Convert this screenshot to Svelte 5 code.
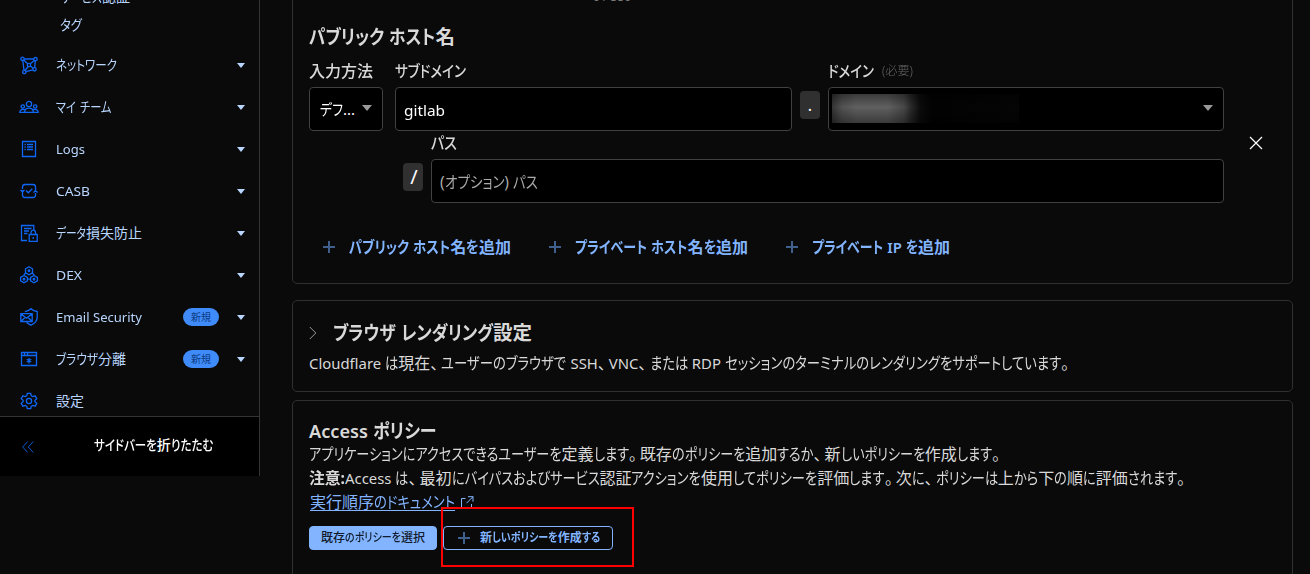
<script>
  const nav = [
    { icon: 'network', label: 'ネットワーク', w: 61, arrow: true },
    { icon: 'team', label: 'マイ チーム', w: 55, arrow: true },
    { icon: 'logs', label: 'Logs', w: 29, arrow: true },
    { icon: 'casb', label: 'CASB', w: 34, arrow: true },
    { icon: 'dlp', label: 'データ損失防止', w: 86, arrow: true },
    { icon: 'dex', label: 'DEX', w: 26, arrow: true },
    { icon: 'email', label: 'Email Security', w: 86, arrow: true, badge: true },
    { icon: 'browser', label: 'ブラウザ分離', w: 70, arrow: true, badge: true },
    { icon: 'gear', label: '設定', w: 28 }
  ];

  const adds = [
    { label: 'パブリック ホスト名を追加', w: 162 },
    { label: 'プライベート ホスト名を追加', w: 173 },
    { label: 'プライベート IP を追加', w: 138 }
  ];

  // Splits a string into punctuation, kana runs and everything else.
  function runs(text) {
    return (text.match(/[\u3001\u3002]|[\u3040-\u30ff]+|[^\u3001\u3002\u3040-\u30ff]+/g) ?? [])
      .map((s) => ({ s, punct: /[\u3001\u3002]/.test(s), kana: /[\u3040-\u30ff]/.test(s), latin: /[A-Za-z]/.test(s) }));
  }

  // Condenses the kana runs so that the line takes the given width.
  function fit(node, width) {
    const all = [...node.children];
    let flex = all.filter((n) => n.classList.contains('kana'));
    if (!flex.length) flex = all;
    const sum = (list) => list.reduce((a, n) => a + n.getBoundingClientRect().width, 0);
    const flexible = sum(flex);
    const f = (width - (sum(all) - flexible)) / flexible;
    for (const n of flex) {
      const w = n.getBoundingClientRect().width;
      n.style.transform = `scaleX(${f})`;
      n.style.marginRight = `${w * (f - 1)}px`;
    }
  }
</script>

{#snippet t(text, w)}<span class="t" use:fit={w}>{#each runs(text) as r}<span class="run" class:kana={r.kana} class:latin={r.latin} class:punct={r.punct}>{r.s}</span>{/each}</span>{/snippet}

{#snippet plus()}
  <svg class="plus" width="12" height="12" viewBox="0 0 12 12"><path d="M6 0v12M0 6h12" /></svg>
{/snippet}

{#snippet icon(name)}
  <svg class="icon" width="20" height="20" viewBox="0 0 20 20">
    {#if name === 'network'}
      <circle cx="3.5" cy="3.8" r="1.7" /><circle cx="16.5" cy="4.200" r="1.700" /><circle cx="15.500" cy="14.300" r="1.700" /><circle cx="5.300" cy="17" r="1.700" /><circle cx="10" cy="10" r="1.700" />
      <path d="M5.400 4h9.400M3.800 5.500l1.200 9.800M16.300 5.900l-.6 6.700M6.900 16.600l6.900-1.800M4.800 5l3.900 3.800M15.200 5.400l-3.900 3.400M11.400 11l2.700 2.200M9.200 11.500l-3.200 4" />
    {:else if name === 'team'}
      <circle cx="10" cy="7" r="2.600" /><circle cx="3.800" cy="9.500" r="1.700" /><circle cx="16.200" cy="9.500" r="1.700" />
      <path d="M5.800 15.300v-.9c0-4.300 8.400-4.300 8.400 0v.9M6 13.200C4 11.700.8 12.700.8 15.300h18.400c0-2.600-3.200-3.600-5.200-2.100" />
    {:else if name === 'logs'}
      <path d="M3.500 2.500h13v15h-13zM8 5.500h6M8 8h6M8 10.500h6M5.500 5.500h1.200M5.500 8h1.200M5.500 10.500h1.200" />
    {:else if name === 'casb'}
      <path d="M3.500 8V6q0-2.500 2.500-2.500h8q2.500 0 2.500 2.500v5M3.500 9v5q0 2.500 2.500 2.500h8q2.500 0 2.500-2.500v-2M1.500 9l2 1.800 2-1.800M14.500 11.500l2-1.800 2 1.800M7 9.500l2.300 2.300 4-4" />
    {:else if name === 'dlp'}
      <path d="M8 17.500H2.500v-15h12.300v5M5 5.500h7.500M5 8h5M5 10.500h3.500M10.200 11.500h8v6.800h-8zM12 11.500v-2c0-3.100 4.500-3.100 4.500 0v2M14.200 14v2" />
    {:else if name === 'dex'}
      <path d="M10 1.800l3.500 2v4L10 9.800l-3.500-2v-4zM5 10.500l3.400 1.900v3.500L5 17.800l-3.400-1.900v-3.500zM15 10.500l3.400 1.900v3.500L15 17.800l-3.400-1.900v-3.500zM4.600 10.500L6.500 7.800M15.400 10.500L13.500 7.800M8.400 14.200h3.200" />
      <circle cx="10" cy="5.800" r=".8" /><circle cx="5" cy="14.200" r=".8" /><circle cx="15" cy="14.200" r=".8" />
    {:else if name === 'email'}
      <path d="M1.800 6.700h11.400v7.800H1.800zM1.800 6.700l5.700 4.500 5.700-4.500M1.800 14.500l4.200-4M13.200 14.500l-4.200-4M5.800 4.600Q9.500 4 12 1.700q2.500 2.300 6.200 2.800v5.700q0 5-6.200 8-2.800-1.200-4.300-2.700" />
    {:else if name === 'browser'}
      <path d="M2.500 3.500h15v13h-15zM2.500 6.500h15M5.500 3.500v3M8.500 3.500v3M10 9v5.400M7.700 10.300l4.600 2.700M12.300 10.300L7.700 13" />
    {:else}
      <circle cx="10" cy="10" r="2.600" />
      <path d="M8.300 2.300h3.400l.5 2.400 1.500.9 2.400-.8 1.700 2.900-1.900 1.600v1.400l1.900 1.600-1.700 2.900-2.400-.8-1.500.9-.5 2.400H8.300l-.5-2.400-1.500-.9-2.400.8-1.700-2.900 1.900-1.600V9.300L2.200 7.700l1.700-2.900 2.400.8 1.500-.9z" />
    {/if}
  </svg>
{/snippet}

<div class="page">
  <aside>
    <nav>
      <div class="sub">{@render t('サービス認証', 70)}</div>
      <div class="sub">{@render t('タグ', 22)}</div>
      <div class="items">
        {#each nav as n}
          <div class="item">
            {@render icon(n.icon)}
            <span class="label">{@render t(n.label, n.w)}</span>
            {#if n.badge}<span class="badge">新規</span>{/if}
            {#if n.arrow}<i class="arrow"></i>{/if}
          </div>
        {/each}
      </div>
    </nav>
    <div class="collapse">
      <svg width="12" height="12" viewBox="0 0 12 12"><path d="M5.7.5L.7 6l5 5.5M11.3.5l-5 5.5 5 5.5" /></svg>
      <span>{@render t('サイドバーを折りたたむ', 119)}</span>
    </div>
  </aside>

  <main>
    <section class="card host">
      <div class="counter">0 / 350</div>
      <h2>{@render t('パブリック ホスト名', 146)}</h2>
      <div class="hostrow">
        <div class="fields">
          <div class="line">
            <div class="field method">
              <div class="lab">{@render t('入力方法', 64)}</div>
              <div class="input select"><span>{@render t('デフ...', 35)}</span><i class="down"></i></div>
            </div>
            <div class="field subdomain">
              <div class="lab">{@render t('サブドメイン', 71)}</div>
              <div class="input text">{@render t('gitlab', 41)}</div>
            </div>
            <div class="sep">.</div>
            <div class="field domain">
              <div class="lab">{@render t('ドメイン', 46)}<small>{@render t('(必要)', 31)}</small></div>
              <div class="input select"><span class="masked"></span><i class="down"></i></div>
            </div>
          </div>
          <div class="line second">
            <div class="sep slash">/</div>
            <div class="field path">
              <div class="lab">{@render t('パス', 26)}</div>
              <div class="input text hint">{@render t('(オプション) パス', 98)}</div>
            </div>
          </div>
        </div>
        <svg class="close" width="14" height="14" viewBox="0 0 14 14"><path d="M1 1l12 12M13 1L1 13" /></svg>
      </div>
      <div class="adds">
        {#each adds as a}
          <div class="add">{@render plus()}{@render t(a.label, a.w)}</div>
        {/each}
      </div>
    </section>

    <section class="card render">
      <h2>
        <svg width="8" height="14" viewBox="0 0 8 14"><path d="M.8 1l6 6-6 6" /></svg>
        {@render t('ブラウザ レンダリング設定', 199)}
      </h2>
      <p>{@render t('Cloudflare は現在、ユーザーのブラウザで SSH、VNC、または RDP セッションのターミナルのレンダリングをサポートしています。', 763)}</p>
    </section>

    <section class="card access">
      <h2>{@render t('Access ポリシー', 127)}</h2>
      <p>{@render t('アプリケーションにアクセスできるユーザーを定義します。既存のポリシーを追加するか、新しいポリシーを作成します。', 694)}</p>
      <p><b>{@render t('注意:', 36)}</b>{@render t('Access は、最初にバイパスおよびサービス認証アクションを使用してポリシーを評価します。次に、ポリシーは上から下の順に評価されます。', 843)}</p>
      <p class="doc">
        <span class="link">{@render t('実行順序のドキュメント', 145)}</span>
        <svg width="13" height="13" viewBox="0 0 13 13"><path d="M4.500 2.500h-4V12.500M10.500 8v4.500M7 .7h5v5M12 .7L5.500 7.200" /></svg>
      </p>
      <div class="buttons">
        <div class="btn primary">{@render t('既存のポリシーを選択', 104)}</div>
        <div class="btn outline">
          {@render plus()}{@render t('新しいポリシーを作成する', 120)}
          <div class="marker"></div>
        </div>
      </div>
    </section>
  </main>
</div>

<style>
  :global(body) { margin: 0; background: #0a0a0a; }
  .page {
    display: flex; width: 1310px; height: 574px; overflow: hidden; background: #0a0a0a; color: #d9d9d9;
    font: 16px/24px "Noto Sans", "Noto Sans CJK JP", sans-serif; font-feature-settings: "palt"; white-space: nowrap;
  }
  .t { display: inline-block; white-space: pre; vertical-align: top; }
  .run { display: inline-block; white-space: pre; transform-origin: 0 50%; }
  .latin { font-size: .93em; }
  .punct { padding-right: 3px; }
  h2, p { margin: 0; }
  svg { display: block; flex: none; fill: none; }

  aside { box-sizing: border-box; width: 260px; height: 476px; flex: none; border-right: 1px solid #343434; }
  nav { height: 416px; overflow: hidden; font-size: 14px; color: #b9d6ff; }
  .sub { height: 26px; line-height: 26px; padding-left: 60px; }
  .sub:first-child { margin-top: -16px; margin-bottom: 2px; }
  .items { padding-top: 6px; }
  .item { display: flex; align-items: center; height: 42px; padding: 0 14px 0 19px; }
  .icon { stroke: #0f67f5; stroke-width: 1.3; margin-right: 17px; }
  .label { flex: 1; margin-top: -1px; }
  .badge { width: 36px; height: 18px; border-radius: 9px; background: #408bfa; color: #0b3c85; font-size: 10px; line-height: 18px; text-align: center; margin-right: 18px; }
  .arrow { border: 4.5px solid transparent; border-top: 5px solid #b9d6ff; border-bottom: 0; }
  .collapse { display: flex; align-items: center; box-sizing: border-box; height: 60px; padding-left: 22px; gap: 60px; border-top: 1px solid #343434; background: #000; color: #fff; font-size: 14px; font-weight: 500; }
  .collapse span { margin-top: -1px; }
  .collapse svg { stroke: #0d57cc; }

  main { width: 1001px; margin-left: 32px; }
  .card { box-sizing: border-box; border: 1px solid #303030; border-radius: 5px; padding: 0 16px; }
  h2 { font-size: 19.5px; line-height: 28px; font-weight: 600; }
  .host { height: 294px; margin-top: -10px; }
  .counter { height: 18px; margin-left: 284px; font-size: 12px; line-height: 18px; color: #777; margin-top: -3px; }
  .host h2 { margin-top: 17px; }
  .hostrow { display: flex; align-items: center; margin-top: 8px; }
  .line { display: flex; }
  .lab { display: flex; height: 28px; line-height: 24px; font-weight: 500; }
  .lab small { font-size: 12px; font-weight: 300; color: #666; margin-left: 8px; }
  .input { box-sizing: border-box; height: 44px; border: 1px solid #414141; border-radius: 4px; background: #000; color: #fff; display: flex; align-items: center; }
  .method { width: 74px; margin-right: 12px; }
  .method .input { padding-left: 10px; font-size: 15px; }
  .subdomain { width: 397px; }
  .domain { width: 396px; }
  .text { padding: 2px 8px 0; }
  .hint { color: #aaa; font-size: 15.5px; }
  .select { justify-content: space-between; padding-right: 10px; }
  .domain .select { padding-left: 3px; }
  .down { border: 5px solid transparent; border-top: 6px solid #999; border-bottom: 0; margin-bottom: 2px; }
  .masked { width: 187px; height: 29px; margin-bottom: 1px; background: linear-gradient(90deg, #343434 0, #525252 10px, #606060 24px, #606060 56px, #484848 72px, #2a2a2a 79px, #0c0c0c 88px, #020202 100px, #050505); -webkit-mask: linear-gradient(#0009, #000 45%, #0009); }
  .sep { width: 20px; height: 28px; margin: 32px 8px 0; border-radius: 4px; background: #303030; color: #fff; text-align: center; line-height: 28px; }
  .slash { font-size: 20px; line-height: 27px; text-indent: 2px; }
  .second { padding-left: 86px; }
  .path { width: 793px; }
  .close { margin: 24px 0 0 25px; stroke: #fff; stroke-width: 1.2; }
  .adds { display: flex; margin: 32px 0 0 14px; gap: 38px; color: #82b4ff; font-weight: 600; }
  .add { display: flex; align-items: center; gap: 14px; }
  .plus { stroke: #3f5f8c; stroke-width: 2; }
  .render { height: 92px; margin-top: 16px; padding-top: 18px; }
  .render h2 { display: flex; align-items: center; gap: 16px; }
  .render svg { stroke: #999; }
  .render p { margin-top: 4px; }
  .access { height: 190px; margin-top: 8px; padding-top: 16px; }
  .access h2 { height: 25px; }
  b { font-weight: 700; }
  .doc { display: flex; padding-left: 1px; color: #82b4ff; }
  .link { height: 19px; border-bottom: 1px solid #82b4ff; margin-top: -1px; padding-top: 2px; line-height: 22px; }
  .doc svg { stroke: #82b4ff; margin: 6px 0 0 6px; }
  .buttons { display: flex; gap: 6px; margin-top: 15px; font-size: 12px; }
  .btn { box-sizing: border-box; position: relative; height: 24px; border: 1px solid #82b4ff; border-radius: 4px; line-height: 22px; }
  .primary { width: 128px; padding-left: 11px; background: #82b4ff; color: #111b2c; font-weight: 500; }
  .outline { width: 170px; padding-left: 14px; display: flex; align-items: center; gap: 10px; color: #82b4ff; font-weight: 600; }
  .marker { position: absolute; left: -3px; top: -20px; width: 189px; height: 56px; border: 2px solid #f00; }
</style>
